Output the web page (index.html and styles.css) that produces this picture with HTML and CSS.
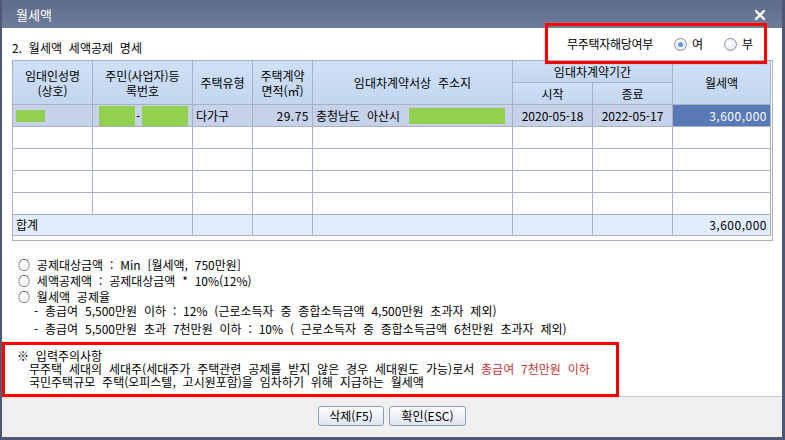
FILE: index.html
```html
<!DOCTYPE html>
<html lang="ko">
<head>
    <meta charset="UTF-8">
    <title>월세액</title>
    <link rel="stylesheet" href="styles.css">
</head>
<body>
    <div class="window">
        <div class="titlebar">
            <span class="title">월세액</span>
            <svg class="close" width="10" height="10" viewBox="0 0 10 10">
                <path d="M1 1 L9 9 M9 1 L1 9" stroke="#fff" stroke-width="2.4" stroke-linecap="square"/>
            </svg>
        </div>

        <div class="content">
            <div class="topline">
                <div class="section-title">2. 월세액 세액공제 명세</div>
                <div class="radio-group">
                    <span class="radio-caption">무주택자해당여부</span>
                    <span class="radio"><span class="dot checked"></span>여</span>
                    <span class="radio"><span class="dot"></span>부</span>
                </div>
            </div>

            <div class="grid-wrap">
                <div class="grid">
                    <!-- header -->
                    <div class="cell head span-r2">임대인성명<br>(상호)</div>
                    <div class="cell head span-r2">주민(사업자)등<br>록번호</div>
                    <div class="cell head span-r2">주택유형</div>
                    <div class="cell head span-r2">주택계약<br>면적(㎡)</div>
                    <div class="cell head span-r2">임대차계약서상 주소지</div>
                    <div class="cell head span-c2">임대차계약기간</div>
                    <div class="cell head span-r2">월세액</div>
                    <div class="cell head">시작</div>
                    <div class="cell head">종료</div>

                    <!-- row 1 -->
                    <div class="cell sel"><span class="mask mask-name"></span></div>
                    <div class="cell sel"><span class="mask mask-id1"></span><span class="dash">-</span><span class="mask mask-id2"></span></div>
                    <div class="cell sel">다가구</div>
                    <div class="cell sel num">29.75</div>
                    <div class="cell sel">충청남도 아산시<span class="mask mask-addr"></span></div>
                    <div class="cell sel center">2020-05-18</div>
                    <div class="cell sel center">2022-05-17</div>
                    <div class="cell active num">3,600,000</div>

                    <!-- empty rows -->
                    <div class="cell"></div><div class="cell"></div><div class="cell"></div><div class="cell"></div>
                    <div class="cell"></div><div class="cell"></div><div class="cell"></div><div class="cell"></div>
                    <div class="cell"></div><div class="cell"></div><div class="cell"></div><div class="cell"></div>
                    <div class="cell"></div><div class="cell"></div><div class="cell"></div><div class="cell"></div>
                    <div class="cell"></div><div class="cell"></div><div class="cell"></div><div class="cell"></div>
                    <div class="cell"></div><div class="cell"></div><div class="cell"></div><div class="cell"></div>
                    <div class="cell"></div><div class="cell"></div><div class="cell"></div><div class="cell"></div>
                    <div class="cell"></div><div class="cell"></div><div class="cell"></div><div class="cell"></div>

                    <!-- total -->
                    <div class="cell total span-c2">합계</div>
                    <div class="cell total"></div>
                    <div class="cell total"></div>
                    <div class="cell total"></div>
                    <div class="cell total"></div>
                    <div class="cell total"></div>
                    <div class="cell total num">3,600,000</div>
                </div>
            </div>

            <div class="notes">
                <div class="note">○ 공제대상금액 : Min [월세액, 750만원]</div>
                <div class="note">○ 세액공제액 : 공제대상금액 * 10%(12%)</div>
                <div class="note">○ 월세액 공제율</div>
                <div class="note sub first">- 총급여 5,500만원 이하 : 12% (근로소득자 중 종합소득금액 4,500만원 초과자 제외)</div>
                <div class="note sub second">- 총급여 5,500만원 초과 7천만원 이하 : 10% ( 근로소득자 중 종합소득금액 6천만원 초과자 제외)</div>
            </div>

            <div class="caution">
                <div class="caution-title">※ 입력주의사항</div>
                <div class="caution-line">무주택 세대의 세대주(세대주가 주택관련 공제를 받지 않은 경우 세대원도 가능)로서 <span class="red">총급여 7천만원 이하</span></div>
                <div class="caution-line">국민주택규모 주택(오피스텔, 고시원포함)을 임차하기 위해 지급하는 월세액</div>
            </div>
        </div>

        <div class="footer">
            <button class="btn btn-del">삭제(F5)</button>
            <button class="btn btn-ok">확인(ESC)</button>
        </div>

        <div class="mark mark-top"></div>
        <div class="mark mark-bottom"></div>
    </div>
</body>
</html>
```

FILE: styles.css
```css
body {
    margin: 0;
    font-family: "Noto Sans CJK KR", "Noto Sans", sans-serif;
    font-size: 12px;
    word-spacing: 3.5px;
    color: #000;
}
.window {
    position: relative;
    width: 785px;
    height: 440px;
    box-sizing: border-box;
    padding: 0 3px 3px 2px;
    background: #4e5874;
    display: flex;
    flex-direction: column;
}
.titlebar {
    height: 28px;
    flex: none;
    display: flex;
    align-items: center;
    justify-content: space-between;
    padding: 0 17px 0 14px;
    background: linear-gradient(#5f6b8a, #6f7b9a);
}
.title {
    color: #fff;
    font-size: 13px;
    line-height: 16px;
    margin-top: 1px;
}
.close {
    margin-top: 1px;
}
.content {
    flex: 1;
    background: #fff;
    padding: 0 10px;
}
.topline {
    display: flex;
    justify-content: space-between;
    align-items: flex-start;
    height: 32px;
}
.section-title {
    padding-top: 12px;
    line-height: 16px;
}
.radio-group {
    display: flex;
    align-items: center;
    padding-top: 8px;
    margin-right: 19px;
    line-height: 16px;
}
.radio-caption {
    margin-right: 21px;
    letter-spacing: -0.3px;
}
.radio {
    display: flex;
    align-items: center;
    gap: 5px;
    margin-right: 21px;
}
.radio:last-child {
    margin-right: 0;
}
.dot {
    width: 13px;
    height: 13px;
    box-sizing: border-box;
    border-radius: 50%;
    border: 1px solid #8290aa;
    background: radial-gradient(circle at 40% 35%, #ffffff, #dfe3ea);
    position: relative;
}
.dot.checked::after {
    content: "";
    position: absolute;
    left: 3px;
    top: 3px;
    width: 5px;
    height: 5px;
    border-radius: 50%;
    background: radial-gradient(circle at 40% 40%, #7fb0f5, #2f6fd8);
}

/* grid */
.grid-wrap {
    width: 761px;
    box-sizing: border-box;
    border: 1px solid #a9b1c5;
    padding: 0 1px 4px 0;
}
.grid {
    display: grid;
    grid-template-columns: 80px 100px 60px 60px 200px 80px 80px 98px;
    grid-template-rows: 22px 22px repeat(5, 22px) 21px;
}
.cell {
    box-sizing: border-box;
    border-right: 1px solid #a9b1c5;
    border-bottom: 1px solid #a9b1c5;
    padding: 0 3px;
    display: flex;
    align-items: center;
    white-space: nowrap;
    overflow: hidden;
    line-height: 14px;
}
.head {
    background: linear-gradient(#cfe0f7, #c3d6f0);
    justify-content: center;
    text-align: center;
    line-height: 15px;
}
.span-r2 { grid-row: span 2; }
.span-c2 { grid-column: span 2; }
.sel { background: #c5d2e9; }
.active {
    background: #5a7ab7;
    color: #fff;
}
.total { background: #e2edfb; }
.num {
    justify-content: flex-end;
    letter-spacing: 0.5px;
}
.center { justify-content: center; }
.mask {
    display: inline-block;
    background: #92d050;
    flex: none;
}
.mask-name {
    width: 29px;
    height: 12px;
}
.mask-id1 {
    width: 36px;
    height: 20px;
    margin-left: 3px;
}
.dash {
    margin: 0 2px 0 1px;
}
.mask-id2 {
    width: 46px;
    height: 21px;
    margin-top: 1px;
}
.mask-addr {
    width: 96px;
    height: 16px;
    margin-left: 9px;
}

/* notes */
.notes {
    margin-top: 16px;
    padding-left: 6px;
}
.note {
    line-height: 16px;
    white-space: nowrap;
}
.note.sub {
    padding-left: 16px;
}
.note.first { margin-top: -2px; }
.note.second { margin-top: 2px; }

.caution {
    margin-top: 12px;
    padding-left: 5px;
}
.caution-title {
    line-height: 13px;
}
.caution-line {
    line-height: 13px;
    padding-left: 12px;
    white-space: nowrap;
}
.red { color: #cc3333; }

/* footer */
.footer {
    height: 41px;
    flex: none;
    box-sizing: border-box;
    border-top: 1px solid #c9c9c9;
    background: #f0f0f0;
    display: flex;
    justify-content: center;
    align-items: flex-start;
    gap: 5px;
    padding-top: 9px;
}
.btn {
    height: 20px;
    box-sizing: border-box;
    border: 1px solid #8e9cb8;
    border-radius: 3px;
    background: linear-gradient(#fdfdfe, #dfe5ef);
    font-family: "Noto Sans CJK KR", "Noto Sans", sans-serif;
    font-size: 12px;
    line-height: 16px;
    padding: 0;
    color: #000;
}
.btn-del { width: 66px; }
.btn-ok { width: 77px; }

/* red annotation boxes */
.mark {
    position: absolute;
    box-sizing: border-box;
    border: 3px solid #ff0000;
    box-shadow: 0 0 1px #ff8080;
    pointer-events: none;
}
.mark-top {
    left: 545px;
    top: 23px;
    width: 222px;
    height: 41px;
}
.mark-bottom {
    left: 2px;
    top: 342px;
    width: 617px;
    height: 55px;
}
```
